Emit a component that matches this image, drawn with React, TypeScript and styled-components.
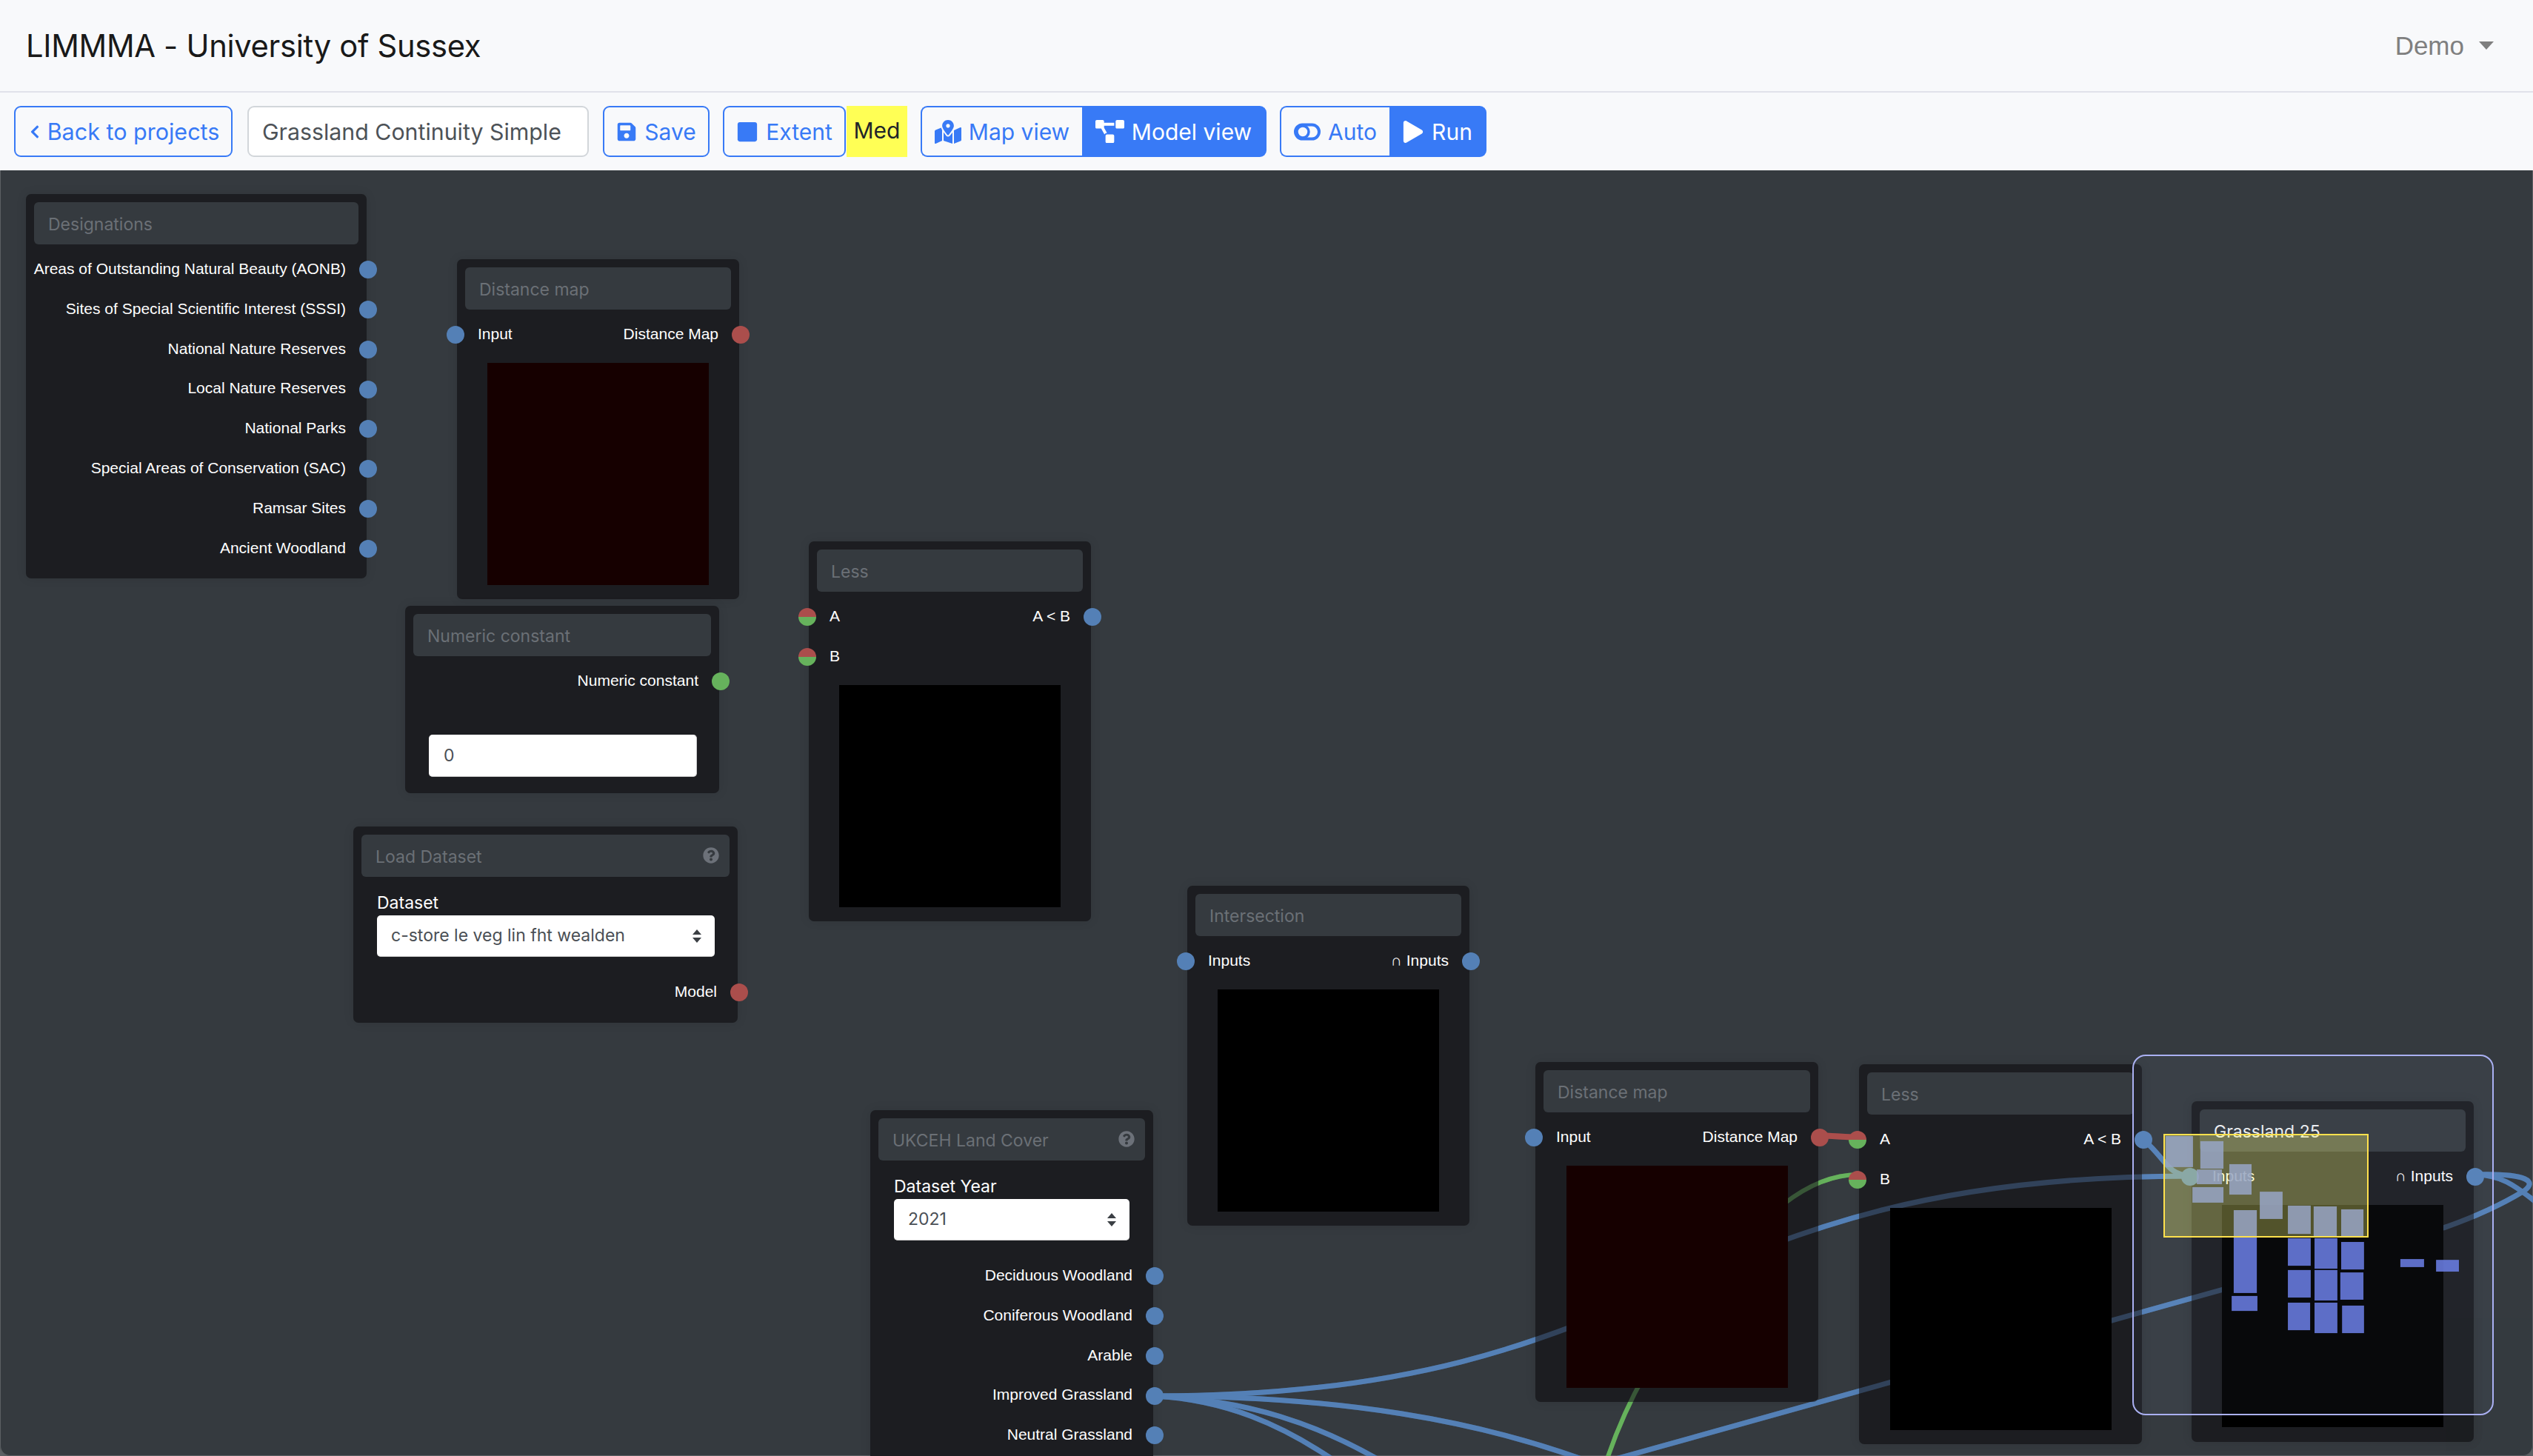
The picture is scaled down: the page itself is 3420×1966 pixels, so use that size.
import React from "react";
import styled, { createGlobalStyle } from "styled-components";
import { FaChevronLeft, FaSave, FaSquare, FaMapMarkedAlt, FaProjectDiagram, FaPlay, FaQuestionCircle } from "react-icons/fa";

const Global = createGlobalStyle`
  html, body { margin: 0; padding: 0; background: #5c6064; }
  body { font-family: Inter, "Liberation Sans", sans-serif; }
  * { box-sizing: border-box; }
`;

const Page = styled.div`
  width: 3420px; height: 1966px; display: flex; flex-direction: column; overflow: hidden; background: #5c6064;
`;
const Header = styled.header`
  height: 125px; flex: none; display: flex; align-items: center; justify-content: space-between;
  padding: 0 53px 0 35px; border-bottom: 2px solid #e1e2ea; background: #f8f9fb;
`;
const Brand = styled.div`
  font-size: 41.7px; color: #191919; letter-spacing: -0.3px;
`;
const UserMenu = styled.div`
  display: flex; align-items: center; gap: 20px; font-size: 35px; color: #7f7f7f;
  font-family: "Liberation Sans", sans-serif;
`;
const Caret = styled.span`
  width: 0; height: 0; border-left: 10px solid transparent; border-right: 10px solid transparent; border-top: 11px solid #7f7f7f;
`;
const Toolbar = styled.div`
  height: 105px; flex: none; display: flex; align-items: center; padding: 0 0 0 19px; background: #f8f9fb;
`;
const Btn = styled.button<{ $w: number; $ml?: number; $on?: boolean; $flatL?: boolean; $flatR?: boolean; $fs?: number; $gap?: number }>`
  width: ${p => p.$w}px; height: 69px; margin-left: ${p => p.$ml ?? 0}px; flex: none;
  display: flex; align-items: center; justify-content: center; gap: ${p => p.$gap ?? 10}px; padding: 0;
  font: 400 ${p => p.$fs ?? 30}px Inter, sans-serif; cursor: pointer;
  color: ${p => (p.$on ? "#fff" : "#387af6")};
  background: ${p => (p.$on ? "#387af6" : "transparent")};
  border: 2.5px solid #387af6;
  border-radius: ${p => (p.$flatL ? 0 : 9)}px ${p => (p.$flatR ? 0 : 9)}px ${p => (p.$flatR ? 0 : 9)}px ${p => (p.$flatL ? 0 : 9)}px;
  ${p => (p.$flatR ? "border-right: 0;" : "")}
  ${p => (p.$flatL ? "border-left: 0;" : "")}
`;
const NameInput = styled.div`
  width: 461px; height: 69px; margin-left: 20px; flex: none; display: flex; align-items: center; padding-left: 18px;
  font-size: 30.3px; color: #4d5257; background: #fff; border: 2px solid #d2d6da; border-radius: 9px;
`;
const Med = styled.div`
  width: 82px; height: 69px; margin-left: 1px; flex: none; display: flex; align-items: center; justify-content: center; padding-bottom: 4px;
  font-size: 30px; color: #212529; background: #ffff55;
`;
const Canvas = styled.main`
  position: relative; flex: 1; background: #353a3f; overflow: hidden; border-radius: 0 0 14px 14px;
  box-shadow: inset 1px 0 0 #5c6064, inset -1px 0 0 #5c6064, inset 0 -1px 0 #5c6064;
`;
const EdgeLayer = styled.svg<{ $dim?: boolean }>`
  position: absolute; left: 0; top: 0; width: 3420px; height: 1736px; pointer-events: none; fill: none;
  ${p => (p.$dim ? "z-index: 2; opacity: 0.38;" : "")}
`;
const Node = styled.section<{ $x: number; $y: number; $w: number; $h: number }>`
  position: absolute; left: ${p => p.$x}px; top: ${p => p.$y - 230}px; width: ${p => p.$w}px; height: ${p => p.$h}px;
  padding: 11px; background: #1c1d21; border-radius: 7px; box-shadow: 0 0 14px rgba(0,0,0,0.1);
`;
const Title = styled.div<{ $active?: boolean }>`
  height: 57px; display: flex; align-items: center; justify-content: space-between; padding: 2px 14px 0 19px;
  font-size: 23px; color: ${p => (p.$active ? "#eceef0" : "#6b7076")}; background: #353a3f; border-radius: 6px;
  svg { width: 22px; height: 22px; color: #6c7179; margin-top: -4px; }
`;
const Row = styled.div<{ $gap?: number; $end?: boolean }>`
  position: relative; height: 53.85px; display: flex; align-items: center; justify-content: ${p => (p.$end ? "flex-end" : "space-between")}; padding: 0 17px 2px;
  font: 400 21px "Liberation Sans", Arial, sans-serif; color: #fff; white-space: nowrap;
  margin-top: ${p => p.$gap ?? 0}px;
`;
const PORT_COLOR = { blue: "#5480b6", red: "#ab4e4c", green: "#66b25c", split: "linear-gradient(#ab4e4c 50%, #66b25c 50%)" };
type PortKind = keyof typeof PORT_COLOR;
const Port = styled.i<{ $kind: PortKind; $side: "l" | "r" }>`
  position: absolute; z-index: 4; top: 15px; ${p => (p.$side === "l" ? "left" : "right")}: -25px;
  width: 24px; height: 24px; border-radius: 50%; background: ${p => PORT_COLOR[p.$kind]};
`;
const Preview = styled.div<{ $red?: boolean }>`
  position: relative; z-index: 3; width: 299px; height: 300px; margin: 11px auto 0;
  background: ${p => (p.$red ? "#160000" : "#000")};
`;
const Field = styled.div<{ $pad: number }>`
  padding: 22px ${p => p.$pad}px 0 21px; font-size: 23px; color: #fff; line-height: 27px;
`;
const Select = styled.div`
  position: relative; height: 56px; margin-top: 3px; display: flex; align-items: center; padding-left: 19px;
  font-size: 23px; color: #4a4f55; background: #fff; border-radius: 5px; border-bottom: 1px solid #ccc;
  svg { position: absolute; right: 18px; top: 19px; width: 12px; height: 18px; }
`;
const NumberBox = styled.div`
  height: 57px; margin: 45px 19px 0 21px; display: flex; align-items: center; padding-left: 20px;
  font-size: 23px; color: #4a4f55; background: #fff; border-radius: 5px; border: 1px solid #ccc; border-width: 0 1px 1px 0;
`;
const Spacer = styled.div<{ $h: number }>`
  height: ${p => p.$h}px;
`;
const Minimap = styled.aside`
  position: absolute; z-index: 5; left: 2879px; top: 1194px; width: 488px; height: 487px;
  background: rgba(190, 220, 255, 0.045); border: 2px solid #aab0f2; border-radius: 18px; overflow: hidden;
`;
const MinimapArt = styled.svg`
  position: absolute; left: -2px; top: -2px; width: 488px; height: 487px;
`;
const AutoIcon = styled.svg`
  width: 36px; height: 24px;
`;
const ViewBtnIcon = styled.span`
  display: flex; font-size: 30px;
`;

const Arrows = () => (
  <svg viewBox="0 0 12 18"><path d="M6 0 L12 7 H0 Z M0 11 H12 L6 18 Z" fill="#3b3f44" /></svg>
);

const BLUE = "#5480b6";
const EDGES: { d: string; c: string; w: number }[] = [
  { d: "M1559 1885 C2260 1885 2250 1588 2957 1588", c: BLUE, w: 7 },
  { d: "M1559 1885 C1800 1885 2000 1915 2175 1985", c: BLUE, w: 7 },
  { d: "M1559 1885 C1680 1890 1780 1920 1885 1985", c: BLUE, w: 7 },
  { d: "M1559 1885 C1650 1890 1730 1920 1820 1985", c: BLUE, w: 7 },
  { d: "M2160 1976 L3299 1658 C3345 1642 3385 1622 3408 1608 C3425 1596 3415 1584 3342 1586", c: BLUE, w: 7 },
  { d: "M3342 1586 C3375 1586 3395 1600 3425 1624", c: BLUE, w: 7 },
  { d: "M2894 1539 C2925 1565 2925 1586 2957 1588", c: BLUE, w: 7 },
  { d: "M2456 1533 L2509 1536", c: "#ab4e4c", w: 8 },
  { d: "M2509 1586 C2440 1586 2380 1640 2300 1740 C2240 1815 2195 1890 2165 1985", c: "#66b25c", w: 6 },
];
const Edges = ({ dim }: { dim?: boolean }) => (
  <EdgeLayer $dim={dim} viewBox="0 230 3420 1736">
    {EDGES.map((e, i) => <path key={i} d={e.d} stroke={e.c} strokeWidth={e.w} />)}
  </EdgeLayer>
);

const MINI = [
  [314,374,407,490],[432,393,511,496],[420,499,506,554],[405,565,511,623],[531,479,607,593],[635,582,713,684],
  [546,651,625,961],[731,634,809,740],[819,637,898,752],[913,648,989,752],
  [539,972,627,1028],[731,756,809,859],[822,756,900,870],[913,770,991,873],[731,875,809,978],[822,875,900,989],
  [910,884,989,986],[731,997,807,1100],[822,997,900,1111],[916,1008,991,1111],[1115,834,1196,864],[1237,837,1315,881],
];
const mx = (v: number) => 2800 + v / 2.529;
const my = (v: number) => 1400 + v / 2.77;

const DESIGNATIONS = ["Areas of Outstanding Natural Beauty (AONB)","Sites of Special Scientific Interest (SSSI)","National Nature Reserves","Local Nature Reserves","National Parks","Special Areas of Conservation (SAC)","Ramsar Sites","Ancient Woodland"];
const LANDCOVER = ["Deciduous Woodland","Coniferous Woodland","Arable","Improved Grassland","Neutral Grassland"];

const TwoPort = ({ l, r, lk, rk, gap = 7 }: { l: string; r: string; lk: PortKind; rk: PortKind; gap?: number }) => (
  <Row $gap={gap}>
    <Port $kind={lk} $side="l" /><span>{l}</span><span>{r}</span><Port $kind={rk} $side="r" />
  </Row>
);
const OutRow = ({ label, kind = "blue", gap = 0 }: { label: string; kind?: PortKind; gap?: number }) => (
  <Row $gap={gap} $end><span>{label}</span><Port $kind={kind} $side="r" /></Row>
);

export default function App() {
  return (
    <Page>
      <Global />
      <Header>
        <Brand>LIMMMA - University of Sussex</Brand>
        <UserMenu>Demo <Caret /></UserMenu>
      </Header>
      <Toolbar>
        <Btn $w={295} $fs={30.5} $gap={7}><FaChevronLeft size={20} />Back to projects</Btn>
        <NameInput>Grassland Continuity Simple</NameInput>
        <Btn $w={144} $ml={19}><FaSave size={28} />Save</Btn>
        <Btn $w={166} $ml={18}><FaSquare size={30} />Extent</Btn>
        <Med>Med</Med>
        <Btn $w={218} $ml={18} $flatR><ViewBtnIcon><FaMapMarkedAlt size={36} /></ViewBtnIcon>Map view</Btn>
        <Btn $w={249} $on $flatL><ViewBtnIcon><FaProjectDiagram size={39} /></ViewBtnIcon>Model view</Btn>
        <Btn $w={148} $ml={18} $flatR>
          <AutoIcon viewBox="0 0 36 24"><rect x="2" y="2.5" width="32" height="19" rx="9.5" fill="none" stroke="#387af6" strokeWidth="4" /><circle cx="12" cy="12" r="8" fill="#f8f9fb" stroke="#387af6" strokeWidth="3.5" /></AutoIcon>
          Auto
        </Btn>
        <Btn $w={131} $on $flatL><FaPlay size={30} />Run</Btn>
      </Toolbar>
      <Canvas>
        <Edges />
        <Node $x={35} $y={262} $w={460} $h={519}>
          <Title>Designations</Title>
          <Spacer $h={7} />
          {DESIGNATIONS.map(d => <OutRow key={d} label={d} />)}
        </Node>
        <Node $x={617} $y={350} $w={381} $h={459}>
          <Title>Distance map</Title>
          <TwoPort l="Input" r="Distance Map" lk="blue" rk="red" />
          <Preview $red />
        </Node>
        <Node $x={547} $y={818} $w={424} $h={253}>
          <Title>Numeric constant</Title>
          <OutRow label="Numeric constant" kind="green" gap={7} />
          <NumberBox>0</NumberBox>
        </Node>
        <Node $x={477} $y={1116} $w={519} $h={265}>
          <Title>Load Dataset<FaQuestionCircle /></Title>
          <Field $pad={20}>Dataset<Select>c-store le veg lin fht wealden<Arrows /></Select></Field>
          <OutRow label="Model" kind="red" gap={21} />
        </Node>
        <Node $x={1092} $y={731} $w={381} $h={513}>
          <Title>Less</Title>
          <TwoPort l="A" r="A < B" lk="split" rk="blue" />
          <Row><Port $kind="split" $side="l" /><span>B</span></Row>
          <Preview />
        </Node>
        <Node $x={1603} $y={1196} $w={381} $h={459}>
          <Title>Intersection</Title>
          <TwoPort l="Inputs" r="∩ Inputs" lk="blue" rk="blue" />
          <Preview />
        </Node>
        <Node $x={1175} $y={1499} $w={382} $h={520}>
          <Title>UKCEH Land Cover<FaQuestionCircle /></Title>
          <Field $pad={21}>Dataset Year<Select>2021<Arrows /></Select></Field>
          <Spacer $h={21} />
          {LANDCOVER.map(d => <OutRow key={d} label={d} />)}
        </Node>
        <Node $x={2073} $y={1434} $w={382} $h={459}>
          <Title>Distance map</Title>
          <TwoPort l="Input" r="Distance Map" lk="blue" rk="red" />
          <Preview $red />
        </Node>
        <Node $x={2510} $y={1437} $w={382} $h={513}>
          <Title>Less</Title>
          <TwoPort l="A" r="A < B" lk="split" rk="blue" />
          <Row><Port $kind="split" $side="l" /><span>B</span></Row>
          <Preview />
        </Node>
        <Node $x={2959} $y={1487} $w={381} $h={460}>
          <Title $active>Grassland 25</Title>
          <TwoPort l="Inputs" r="∩ Inputs" lk="blue" rk="blue" />
          <Preview />
        </Node>
        <Edges dim />
        <Minimap>
          <MinimapArt viewBox="2879 1425 488 487">
            {MINI.map((r, i) => (
              <rect key={i} x={mx(r[0])} y={my(r[1])} width={(r[2] - r[0]) / 2.529} height={(r[3] - r[1]) / 2.77} fill="rgb(107,127,231)" opacity="0.86" />
            ))}
            <rect x="2922" y="1533" width="275" height="138" fill="#ffff78" fillOpacity="0.3" stroke="#ffe14d" strokeWidth="2" />
          </MinimapArt>
        </Minimap>
      </Canvas>
    </Page>
  );
}
